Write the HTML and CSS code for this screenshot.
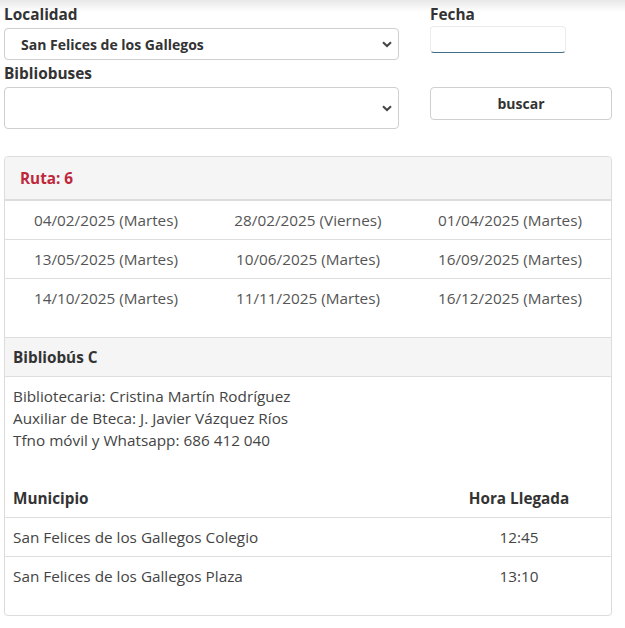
FILE: index.html
```html
<!DOCTYPE html>
<html lang="es">
<head>
<meta charset="utf-8">
<link rel="stylesheet" href="styles.css">
</head>
<body>
<div class="topfade"></div>
<div class="page">
  <form class="search">
    <div class="col-left">
      <label class="lbl">Localidad</label>
      <div class="select sel1">
        <span>San Felices de los Gallegos</span>
        <svg class="chev" viewBox="0 0 10 7" width="10" height="7"><path d="M1 1.2 L5 5 L9 1.2" fill="none" stroke="#444" stroke-width="2"/></svg>
      </div>
      <label class="lbl lbl2">Bibliobuses</label>
      <div class="select sel2">
        <span></span>
        <svg class="chev" viewBox="0 0 10 7" width="10" height="7"><path d="M1 1.2 L5 5 L9 1.2" fill="none" stroke="#444" stroke-width="2"/></svg>
      </div>
    </div>
    <div class="col-right">
      <label class="lbl">Fecha</label>
      <div class="date"></div>
      <div class="btn">buscar</div>
    </div>
  </form>

  <div class="card">
    <div class="card-head"><span class="ruta">Ruta: 6</span></div>
    <div class="dates">
      <div class="drow"><span>04/02/2025 (Martes)</span><span>28/02/2025 (Viernes)</span><span>01/04/2025 (Martes)</span></div>
      <div class="drow"><span>13/05/2025 (Martes)</span><span>10/06/2025 (Martes)</span><span>16/09/2025 (Martes)</span></div>
      <div class="drow"><span>14/10/2025 (Martes)</span><span>11/11/2025 (Martes)</span><span>16/12/2025 (Martes)</span></div>
    </div>
    <div class="bus-head">Bibliobús C</div>
    <div class="bus-info">
      <div>Bibliotecaria: Cristina Martín Rodríguez</div>
      <div>Auxiliar de Bteca: J. Javier Vázquez Ríos</div>
      <div>Tfno móvil y Whatsapp: 686 412 040</div>
    </div>
    <div class="stops">
      <div class="srow shead"><span class="mun">Municipio</span><span class="hora">Hora Llegada</span></div>
      <div class="srow"><span class="mun">San Felices de los Gallegos Colegio</span><span class="hora">12:45</span></div>
      <div class="srow"><span class="mun">San Felices de los Gallegos Plaza</span><span class="hora">13:10</span></div>
    </div>
  </div>
</div>
</body>
</html>
```

FILE: styles.css
```css
* { box-sizing: border-box; }
html, body { margin: 0; padding: 0; background: #fff; }
body {
  font-family: "Open Sans", "DejaVu Sans", sans-serif;
  font-size: 15.3px;
  color: #555;
  position: relative;
}
.topfade {
  position: absolute;
  left: 0; right: 0; top: 0;
  height: 12px;
  background: linear-gradient(#e8e8e8, rgba(255,255,255,0));
  pointer-events: none;
}
.page {
  padding: 5px 13px 0 4px;
  position: relative;
}
.search {
  display: flex;
  gap: 31px;
  margin: 0;
}
.col-left { width: 395px; display: flex; flex-direction: column; }
.col-right { width: 182px; display: flex; flex-direction: column; }
.lbl {
  font-weight: 700;
  font-size: 15.4px;
  color: #333;
  line-height: 20px;
  height: 20px;
}
.lbl2 { margin-top: 4px; }
.select {
  margin-top: 3px;
  border: 1px solid #cfcfcf;
  border-radius: 4px;
  display: flex;
  align-items: center;
  justify-content: space-between;
  padding: 0 6px 0 16px;
  background: #fff;
}
.sel1 { height: 32px; font-weight: 700; color: #333; font-size: 14px; }
.sel2 { height: 42px; }
.chev { margin-top: 1px; }
.date {
  margin-top: 1px;
  width: 136px;
  height: 27px;
  border: 1px solid #ececec;
  border-bottom: 1.5px solid #3f6d86;
  border-radius: 4px;
}
.btn {
  margin-top: 34px;
  height: 33px;
  border: 1px solid #cfcfcf;
  border-radius: 4px;
  display: flex;
  align-items: center;
  justify-content: center;
  font-weight: 700;
  font-size: 14px;
  color: #333;
}
.card {
  margin-top: 27px;
  border: 1px solid #dcdcdc;
  border-radius: 4px;
  height: 460px;
  box-shadow: 0 1px 1px rgba(0,0,0,0.04);
}
.card-head {
  height: 44px;
  background: #f5f5f5;
  border-bottom: 2px solid #dcdcdc;
  border-radius: 4px 4px 0 0;
  display: flex;
  align-items: center;
  padding-left: 15px;
}
.ruta { color: #c0263b; font-weight: 700; }
.drow {
  display: grid;
  grid-template-columns: 1fr 1fr 1fr;
  height: 39px;
  align-items: center;
  text-align: center;
  border-top: 1px solid #dedede;
}
.drow:first-child { border-top: none; height: 38px; }
.dates { padding-bottom: 20px; }
.bus-head {
  height: 40px;
  background: #f5f5f5;
  border-top: 1px solid #dedede;
  border-bottom: 1px solid #dedede;
  display: flex;
  align-items: center;
  padding-left: 8px;
  font-weight: 700;
  color: #333;
}
.bus-info {
  padding: 8px 8px 0 8px;
  line-height: 22px;
  color: #444;
}
.stops { margin-top: 27px; }
.srow {
  display: flex;
  align-items: center;
  height: 39px;
  border-top: 1px solid #dedede;
  padding-left: 8px;
  color: #444;
}
.srow.shead { border-top: none; height: 39px; font-weight: 700; color: #333; }
.mun { flex: 1; }
.hora { width: 184px; text-align: center; }
```
